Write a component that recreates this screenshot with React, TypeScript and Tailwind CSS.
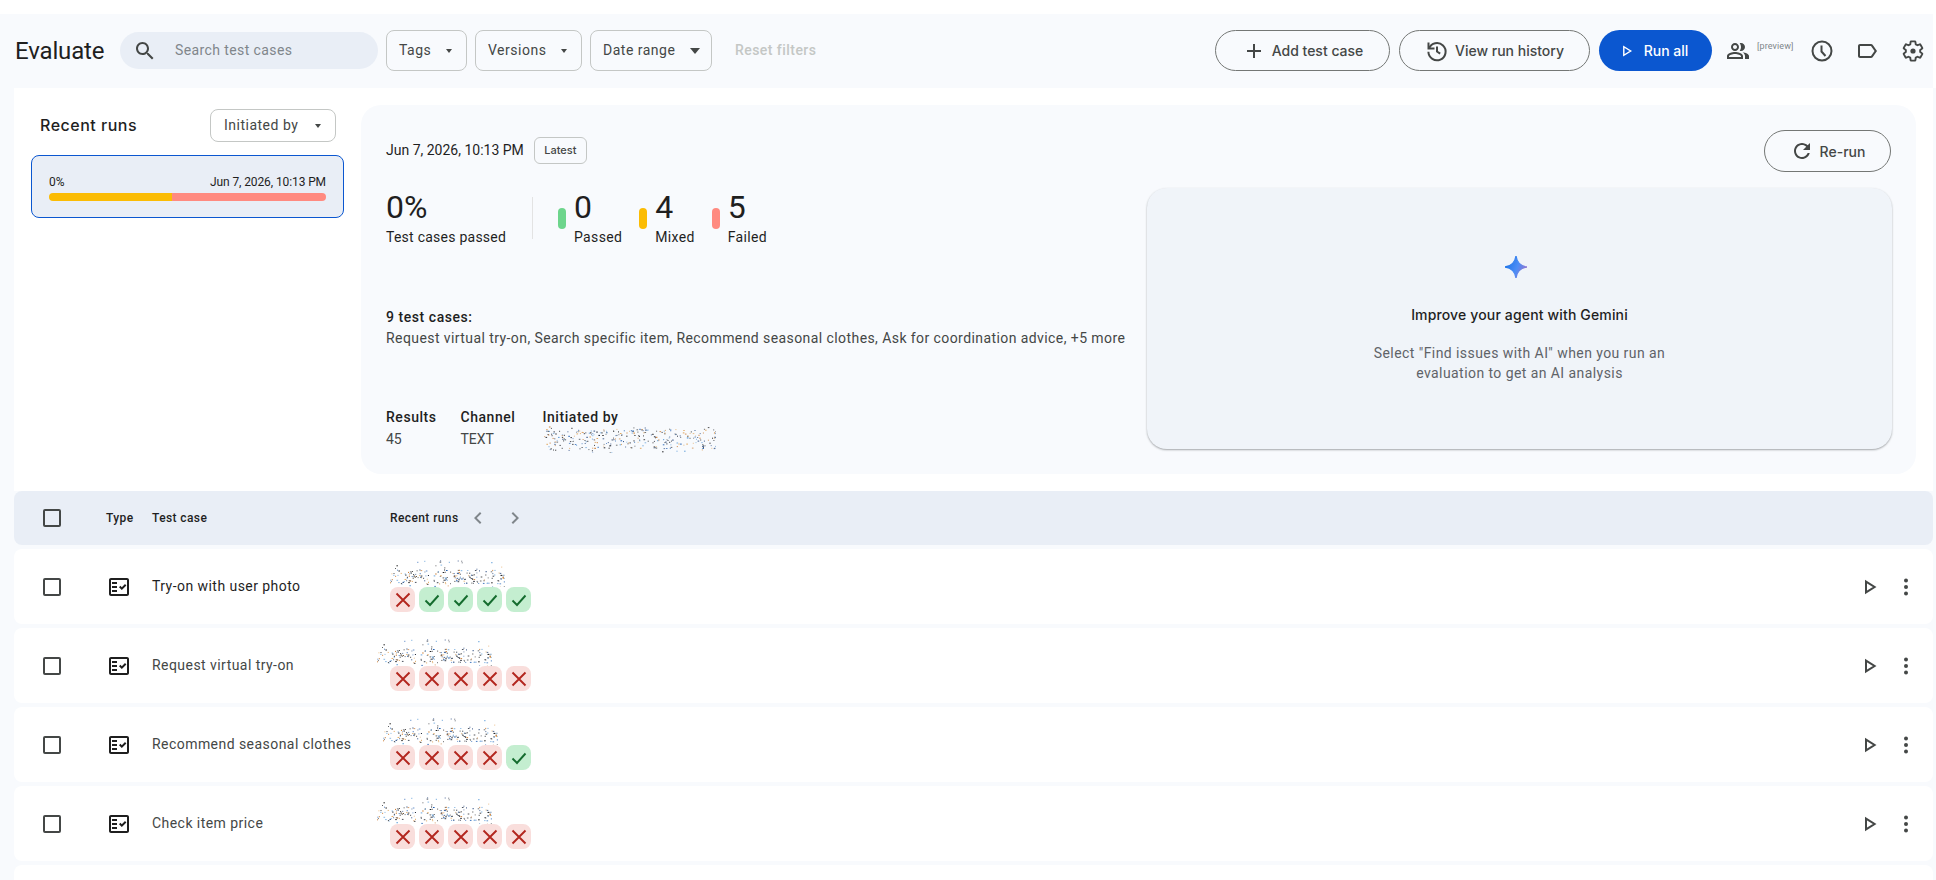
import React from "react";

const font = { fontFamily: "Roboto, 'Liberation Sans', sans-serif" };

function Ic({ d, cls = "", size = 24 }: { d: string; cls?: string; size?: number }) {
  return (
    <svg width={size} height={size} viewBox="0 0 24 24" fill="currentColor" className={"shrink-0 " + cls}>
      <path d={d} />
    </svg>
  );
}

const P = {
  search:
    "M15.5 14h-.79l-.28-.27C15.41 12.59 16 11.11 16 9.5 16 5.91 13.09 3 9.5 3S3 5.91 3 9.5 5.91 16 9.5 16c1.61 0 3.09-.59 4.23-1.57l.27.28v.79l5 4.99L20.49 19l-4.99-5zm-6 0C7.01 14 5 11.99 5 9.5S7.01 5 9.5 5 14 7.01 14 9.5 11.99 14 9.5 14z",
  add: "M19 13h-6v6h-2v-6H5v-2h6V5h2v6h6v2z",
  refresh:
    "M17.65 6.35C16.2 4.9 14.21 4 12 4c-4.42 0-7.99 3.58-7.99 8s3.57 8 7.99 8c3.73 0 6.84-2.55 7.73-6h-2.08c-.82 2.33-3.04 4-5.65 4-3.31 0-6-2.69-6-6s2.69-6 6-6c1.66 0 3.14.69 4.22 1.78L13 11h7V4l-2.35 2.35z",
  group:
    "M16.67 13.13C18.04 14.06 19 15.32 19 17v3h4v-3c0-2.18-3.57-3.47-6.33-3.87zM15 12c2.21 0 4-1.79 4-4s-1.79-4-4-4c-.47 0-.91.1-1.33.24C14.5 5.27 15 6.58 15 8s-.5 2.73-1.33 3.76c.42.14.86.24 1.33.24zM9 12c2.21 0 4-1.79 4-4s-1.79-4-4-4-4 1.79-4 4 1.79 4 4 4zm0-6c1.1 0 2 .9 2 2s-.9 2-2 2-2-.9-2-2 .9-2 2-2zM9 13c-2.67 0-8 1.34-8 4v3h16v-3c0-2.66-5.33-4-8-4zm6 5H3v-.99C3.2 16.29 6.3 15 9 15s5.8 1.29 6 2z",
  label:
    "M17.63 5.84C17.27 5.33 16.67 5 16 5L5 5.01C3.9 5.01 3 5.9 3 7v10c0 1.1.9 1.99 2 1.99L16 19c.67 0 1.27-.33 1.63-.84L22 12l-4.37-6.16zM16 17H5V7h11l3.55 5L16 17z",
  fact:
    "M20 3H4c-1.1 0-2 .9-2 2v14c0 1.1.9 2 2 2h16c1.1 0 2-.9 2-2V5c0-1.1-.9-2-2-2zm0 16H4V5h16v14zM19.41 10.42L17.99 9l-3.17 3.17-1.41-1.42L12 12.16 14.82 15zM5 7h5v2H5zM5 11h5v2H5zM5 15h5v2H5z",
  left: "M15.4 7.4 14 6l-6 6 6 6 1.4-1.4L10.8 12z",
  right: "M8.6 7.4 10 6l6 6-6 6-1.4-1.4L13.2 12z",
};

function History() {
  return (
    <svg width="24" height="24" viewBox="0 0 24 24" fill="none" stroke="currentColor" strokeWidth="2" className="shrink-0">
      <path d="M3.5 3.5V9.5H9.5" />
      <path d="M4 9.5A8.6 8.6 0 1 1 3.4 12.8" />
      <path d="M12 7.5V12.5L15.2 14.6" />
    </svg>
  );
}

function Play({ cls = "", sw = 2 }: { cls?: string; sw?: number }) {
  return (
    <svg width="24" height="24" viewBox="0 0 24 24" fill="none" stroke="currentColor" strokeWidth={sw} className={"shrink-0 " + cls}>
      <path d="M8 6.6V17.4L16.6 12Z" strokeLinejoin="miter" />
    </svg>
  );
}

function Gear() {
  return (
    <svg width="24" height="24" viewBox="0 0 24 24" fill="none" stroke="currentColor" strokeWidth="1.9" className="shrink-0">
      <path d="M19.14 12.94c.04-.3.06-.61.06-.94 0-.32-.02-.64-.07-.94l2.03-1.58c.18-.14.23-.41.12-.61l-1.92-3.32c-.12-.22-.37-.29-.59-.22l-2.39.96c-.5-.38-1.03-.7-1.62-.94l-.36-2.54c-.04-.24-.24-.41-.48-.41h-3.84c-.24 0-.43.17-.47.41l-.36 2.54c-.59.24-1.13.57-1.62.94l-2.39-.96c-.22-.08-.47 0-.59.22L2.74 8.87c-.12.21-.08.47.12.61l2.03 1.58c-.05.3-.09.63-.09.94s.02.64.07.94l-2.03 1.58c-.18.14-.23.41-.12.61l1.92 3.32c.12.22.37.29.59.22l2.39-.96c.5.38 1.03.7 1.62.94l.36 2.54c.05.24.24.41.48.41h3.84c.24 0 .44-.17.47-.41l.36-2.54c.59-.24 1.13-.56 1.62-.94l2.39.96c.22.08.47 0 .59-.22l1.92-3.32c.12-.22.07-.47-.12-.61l-2.01-1.58z" />
      <circle cx="12" cy="12" r="2.6" fill="currentColor" stroke="none" />
    </svg>
  );
}

function Clock() {
  return (
    <svg width="24" height="24" viewBox="0 0 24 24" fill="none" stroke="currentColor" strokeWidth="2" className="shrink-0">
      <circle cx="12" cy="12" r="9.5" />
      <path d="M11.5 6.5V12.5L15.5 17" />
    </svg>
  );
}

function Caret({ big = false }: { big?: boolean }) {
  const w = big ? 10 : 6;
  const h = big ? 6 : 4;
  return (
    <svg width={w} height={h} viewBox={`0 0 ${w} ${h}`} fill="#444746" className="shrink-0">
      <path d={`M0 0H${w}L${w / 2} ${h}Z`} />
    </svg>
  );
}

function Noise({ w, h, seed, band = 0.3 }: { w: number; h: number; seed: number; band?: number }) {
  let s = seed;
  const rnd = () => {
    s = (s * 16807) % 2147483647;
    return (s - 1) / 2147483646;
  };
  const colors = ["#1f1f1f", "#3c4043", "#101828", "#c8701e", "#1f5fb4", "#5a9bd8", "#e0a050", "#202124", "#2a4a80"];
  const dots = [];
  const count = Math.round((w * h) / 15);
  for (let i = 0; i < count; i++) {
    const x = rnd() * w;
    const bias = rnd();
    const y = bias < 0.72 ? h * band + rnd() * h * (1 - band) * 0.8 : rnd() * h;
    dots.push(
      <rect key={i} x={x.toFixed(1)} y={y.toFixed(1)} width={rnd() > 0.7 ? 1.6 : 1} height={1} fill={colors[Math.floor(rnd() * colors.length)]} opacity={0.6 + rnd() * 0.4} />
    );
  }
  return (
    <svg width={w} height={h} viewBox={`0 0 ${w} ${h}`} className="block shrink-0">
      {dots}
    </svg>
  );
}

function Filter({ label, w, big }: { label: string; w: string; big?: boolean }) {
  return (
    <div className={"flex h-[41px] items-center justify-between rounded-lg border border-[#c4c7c5] pl-[12px] text-[14px] tracking-[0.5px] text-[#444746] " + w + (big ? " pr-[11px]" : " pr-[14px]")}>
      <span>{label}</span>
      <Caret big={big} />
    </div>
  );
}

function Pill({ ok }: { ok: boolean }) {
  return ok ? (
    <div className="flex h-[25px] w-[25px] items-center justify-center rounded-lg bg-[#c4eed0] text-[#146c2e]">
      <svg width="18" height="18" viewBox="0 0 18 18" fill="none" stroke="currentColor" strokeWidth="1.9"><path d="M2.5 9.5 7 14 15.5 4.5" /></svg>
    </div>
  ) : (
    <div className="flex h-[25px] w-[25px] items-center justify-center rounded-lg bg-[#f9dedc] text-[#b3261e]">
      <svg width="18" height="18" viewBox="0 0 18 18" fill="none" stroke="currentColor" strokeWidth="1.9"><path d="M2.5 2.5 15.5 15.5M15.5 2.5 2.5 15.5" /></svg>
    </div>
  );
}

function Checkbox() {
  return <div className="h-[18px] w-[18px] rounded-[2px] border-2 border-[#444746]" />;
}

function Dots() {
  return (
    <svg width="24" height="24" viewBox="0 0 24 24" fill="#444746" className="shrink-0">
      <circle cx="12" cy="5.5" r="2" />
      <circle cx="12" cy="12" r="2" />
      <circle cx="12" cy="18.5" r="2" />
    </svg>
  );
}

function Row({ name, runs, shift, seed, dark }: { name: string; runs: boolean[]; shift: string; seed: number; dark?: boolean }) {
  return (
    <div className="grid h-[75px] grid-cols-[92px_46px_238px_1fr] rounded-lg bg-white">
      <div className="flex items-center pl-[29px]">
        <Checkbox />
      </div>
      <div className="flex items-center pl-[1px] text-[#1f1f1f]">
        <Ic d={P.fact} />
      </div>
      <div className={"flex items-center text-[14px] tracking-[0.45px] " + (dark ? "text-[#1f1f1f]" : "text-[#444746]")}>{name}</div>
      <div className="flex items-center justify-between pr-[15px]">
        <div className="flex h-full flex-col pt-[11px]">
          <div className={shift}>
            <Noise w={115} h={27} seed={seed} band={0.35} />
          </div>
          <div className="flex gap-[4px]">
            {runs.map((r, i) => (
              <Pill key={i} ok={r} />
            ))}
          </div>
        </div>
        <div className="flex items-center gap-[12px] text-[#444746]">
          <Play />
          <Dots />
        </div>
      </div>
    </div>
  );
}

function Stat({ n, label, bar, cls = "" }: { n: string; label: string; bar: string; cls?: string }) {
  return (
    <div className={"flex gap-[8px] " + cls}>
      <div className={"mt-[21px] h-[21px] w-[8px] rounded-full " + bar} />
      <div className="flex flex-col">
        <div className="h-[40px] text-[32px] leading-[40px] text-[#1f1f1f]">{n}</div>
        <div className="h-[20px] text-[14px] leading-[20px] tracking-[0.35px] text-[#1f1f1f]">{label}</div>
      </div>
    </div>
  );
}

function Meta({ title, children, cls = "" }: { title: string; children: React.ReactNode; cls?: string }) {
  return (
    <div className={"flex flex-col " + cls}>
      <div className="h-[20px] text-[14px] font-medium leading-[20px] tracking-[0.55px] text-[#1f1f1f]">{title}</div>
      {children}
    </div>
  );
}

export default function App() {
  const x = false;
  const o = true;
  return (
    <div style={font} className="flex h-[880px] w-full flex-col overflow-hidden bg-white pt-[14px]">
      <header className="mr-[3px] flex h-[74px] shrink-0 items-center bg-[#f8fafd] pb-[1px] pl-[15px]">
        <h1 className="w-[88px] text-[24px] font-normal tracking-[-0.15px] text-[#1f1f1f]">Evaluate</h1>
        <div className="ml-[17px] flex h-[37px] w-[258px] items-center rounded-full bg-[#e9eef6] pl-[13px] text-[#444746]">
          <Ic d={P.search} />
          <span className="ml-[18px] text-[14px] tracking-[0.4px] text-[#80868b]">Search test cases</span>
        </div>
        <div className="ml-[8px] flex gap-[8px]">
          <Filter label="Tags" w="w-[81px]" />
          <Filter label="Versions" w="w-[107px]" />
          <Filter label="Date range" w="w-[122px]" big />
        </div>
        <span className="ml-[23px] text-[14px] font-medium tracking-[0.45px] text-[#c4c7c5]">Reset filters</span>
        <div className="ml-auto flex items-center gap-[9px] font-[Inter] text-[14px] font-medium text-[#444746]">
          <div className="flex h-[41px] w-[175px] items-center justify-center gap-[6px] rounded-full border border-[#747775]">
            <Ic d={P.add} />
            <span>Add test case</span>
          </div>
          <div className="flex h-[41px] w-[191px] items-center justify-center gap-[6px] rounded-full border border-[#747775]">
            <History />
            <span>View run history</span>
          </div>
          <div className="flex h-[41px] w-[113px] items-center justify-center gap-[5px] rounded-full bg-[#0b57d0] text-white">
            <Play sw={1.8} cls="-ml-[8px] scale-[0.8]" />
            <span>Run all</span>
          </div>
        </div>
        <div className="ml-[14px] flex items-center text-[#444746]">
          <Ic d={P.group} />
          <span className="ml-[7px] mb-[8px] w-[37px] text-[9px] tracking-[0.1px] text-[#80868b]">[preview]</span>
          <div className="ml-[16px]"><Clock /></div>
          <div className="ml-[21px]"><Ic d={P.label} /></div>
          <div className="ml-[22px] mr-[8px]"><Gear /></div>
        </div>
      </header>

      <div className="flex min-h-0 flex-1 flex-col bg-[#f8fafd] pl-[14px] pr-[3px]">
        <section className="flex h-[403px] shrink-0 bg-white">
          <div className="w-[347px] shrink-0 pl-[17px] pt-[21px]">
            <div className="flex w-[305px] items-center justify-between pl-[9px]">
              <span className="-mt-[1px] font-[Inter] text-[16px] font-medium tracking-[0.5px] text-[#1f1f1f]">Recent runs</span>
              <div className="flex h-[33px] w-[126px] items-center justify-between rounded-lg border border-[#c4c7c5] pl-[13px] pr-[14px] text-[14px] tracking-[0.5px] text-[#444746]">
                <span>Initiated by</span>
                <Caret />
              </div>
            </div>
            <div className="mt-[13px] h-[63px] w-[313px] rounded-lg border border-[#0b57d0] bg-[#e9eef6] px-[17px] pt-[17px]">
              <div className="flex h-[18px] items-center justify-between text-[12px] text-[#1f1f1f]">
                <span>0%</span>
                <span className="tracking-[-0.1px]">Jun 7, 2026, 10:13 PM</span>
              </div>
              <div className="mt-[2px] flex h-[8px] overflow-hidden rounded-full">
                <div className="w-[44.4%] bg-[#fbbc04]" />
                <div className="flex-1 bg-[#ff8a80]" />
              </div>
            </div>
          </div>

          <div className="mt-[17px] flex h-[369px] w-[1555px] justify-between rounded-[20px] bg-[#f8fafd] pl-[25px] pr-[24px]">
            <div className="flex flex-col pt-[32px]">
              <div className="flex items-center">
                <span className="text-[14px] text-[#1f1f1f]">Jun 7, 2026, 10:13 PM</span>
                <span className="ml-[10px] flex h-[27px] w-[53px] items-center justify-center rounded-md border border-[#c4c7c5] font-[Inter] text-[11px] font-medium text-[#444746]">Latest</span>
              </div>
              <div className="mt-[23px] flex">
                <div className="flex w-[146px] flex-col">
                  <div className="h-[40px] text-[32px] leading-[40px] text-[#1f1f1f]">0%</div>
                  <div className="h-[20px] text-[14px] leading-[20px] tracking-[0.25px] text-[#1f1f1f]">Test cases passed</div>
                </div>
                <div className="mt-[10px] h-[42px] w-px bg-[#e3e3e3]" />
                <Stat n="0" label="Passed" bar="bg-[#6dd58c]" cls="ml-[25px]" />
                <Stat n="4" label="Mixed" bar="bg-[#fbbc04]" cls="ml-[17px]" />
                <Stat n="5" label="Failed" bar="bg-[#ff8a80]" cls="ml-[17px]" />
              </div>
              <div className="mt-[60px] h-[20px] text-[14px] font-medium leading-[20px] tracking-[0.55px] text-[#1f1f1f]">9 test cases:</div>
              <div className="mt-[1px] h-[20px] whitespace-nowrap text-[14px] leading-[20px] tracking-[0.42px] text-[#444746]">
                Request virtual try-on, Search specific item, Recommend seasonal clothes, Ask for coordination advice, +5 more
              </div>
              <div className="mt-[59px] flex text-[14px] leading-[20px] text-[#444746]">
                <Meta title="Results" cls="w-[74.5px]">
                  <div className="mt-[2px]">45</div>
                </Meta>
                <Meta title="Channel" cls="w-[82px]">
                  <div className="mt-[2px]">TEXT</div>
                </Meta>
                <Meta title="Initiated by">
                  <div className="-mt-[1px] ml-[1px]">
                    <Noise w={172} h={27} seed={4211} band={0.1} />
                  </div>
                </Meta>
              </div>
            </div>

            <div className="flex w-[745px] shrink-0 flex-col items-end pt-[25px]">
              <div className="mr-px flex h-[42px] w-[127px] items-center justify-center gap-[6px] rounded-full border border-[#747775] font-[Inter] text-[14px] font-medium text-[#444746]">
                <Ic d={P.refresh} />
                <span>Re-run</span>
              </div>
              <div className="mt-[16px] flex h-[261px] w-[745px] flex-col items-center rounded-[20px] bg-[#f0f4f9] pt-[68px] shadow-[0_1px_2px_rgba(60,64,67,0.45)]">
                <svg width="22" height="22" viewBox="0 0 24 24" className="-ml-[8px]">
                  <defs>
                    <linearGradient id="gem" x1="0" y1="0.3" x2="1" y2="0.7">
                      <stop offset="0" stopColor="#1a73e8" />
                      <stop offset="0.55" stopColor="#4d8df5" />
                      <stop offset="1" stopColor="#9b72cb" />
                    </linearGradient>
                  </defs>
                  <path d="M12 0C12.8 6.5 17.5 11.2 24 12C17.5 12.8 12.8 17.5 12 24C11.2 17.5 6.5 12.8 0 12C6.5 11.2 11.2 6.5 12 0Z" fill="url(#gem)" stroke="url(#gem)" strokeWidth="1.5" />
                </svg>
                <div className="mt-[27px] h-[20px] font-[Inter] text-[14px] font-medium leading-[20px] tracking-[0.15px] text-[#1f1f1f]">Improve your agent with Gemini</div>
                <div className="mt-[18px] text-center text-[14px] leading-[20px] tracking-[0.43px] text-[#5f6368]">
                  Select "Find issues with AI" when you run an
                  <br />
                  evaluation to get an AI analysis
                </div>
              </div>
            </div>
          </div>
        </section>

        <div className="grid h-[54px] shrink-0 grid-cols-[92px_46px_238px_1fr] items-center rounded-lg bg-[#e9eef6] text-[12px] font-medium tracking-[0.4px] text-[#1f1f1f]">
          <div className="pl-[29px]"><Checkbox /></div>
          <div>Type</div>
          <div>Test case</div>
          <div className="flex items-center">
            <span>Recent runs</span>
            <div className="ml-[7px] flex gap-[13px] text-[#80868b]">
              <Ic d={P.left} />
              <Ic d={P.right} />
            </div>
          </div>
        </div>

        <div className="mt-[4px] flex flex-col gap-[4px]">
          <Row name="Try-on with user photo" runs={[x, o, o, o, o]} shift="" seed={987} dark />
          <Row name="Request virtual try-on" runs={[x, x, x, x, x]} shift="-ml-[13px]" seed={987} />
          <Row name="Recommend seasonal clothes" runs={[x, x, x, x, o]} shift="-ml-[7px]" seed={987} />
          <Row name="Check item price" runs={[x, x, x, x, x]} shift="-ml-[13px]" seed={987} />
          <div className="h-[75px] shrink-0 rounded-lg bg-white" />
        </div>
      </div>
    </div>
  );
}
